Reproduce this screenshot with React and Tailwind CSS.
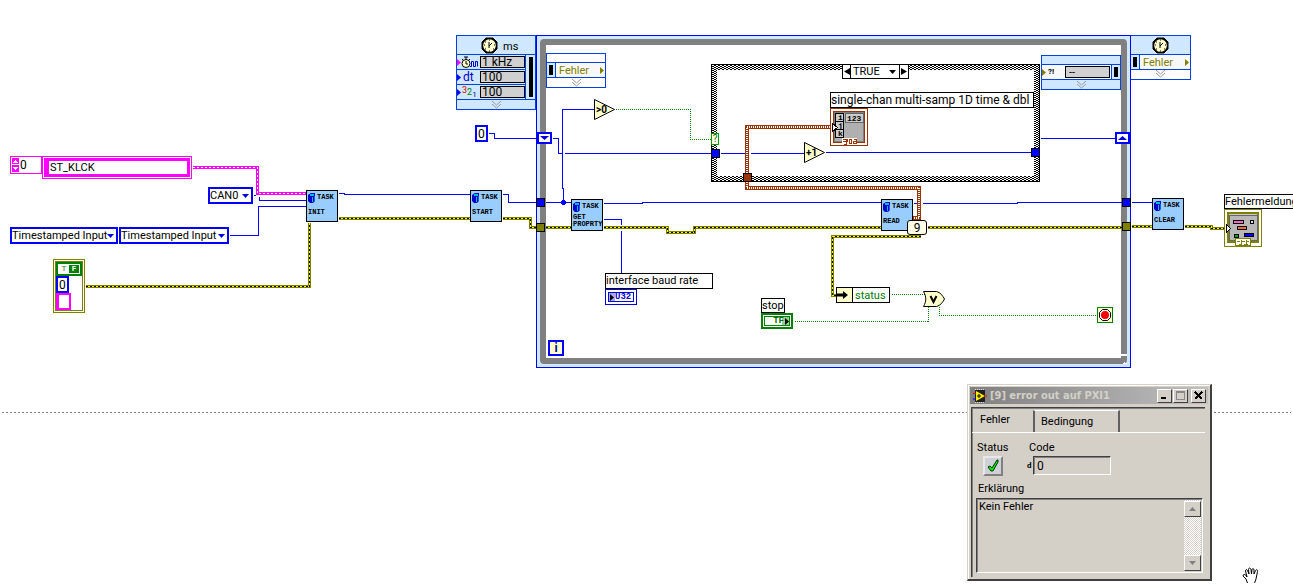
import { useState } from "react";

// wires are given as pixel coordinates on the diagram canvas
const blueWires = [
  "M253 195h2",
  "M259 196v4h47",
  "M229 235h29v-29h48",
  "M338 193h6v1h126",
  "M502 194h6v8h28",
  "M545 202h26",
  "M594 109h-32v79h1v14",
  "M488 133h6v5h43",
  "M552 138h6v15h3",
  "M564 153h147",
  "M720 153h24",
  "M750 153h54",
  "M825 152h206",
  "M1040 138h75",
  "M603 203h39v-1h239",
  "M922 203h95v-1h105",
  "M913 203h3",
  "M1131 202h21",
  "M603 219h18v5",
  "M621 230v43",
];

const errorWires = [
  "M85 286h224v-64",
  "M338 218h132",
  "M502 218h28v9h6",
  "M545 227h26",
  "M603 227h64v5h27v-5h187",
  "M927 227h195",
  "M920 236h-88v59h4",
  "M1131 226h21",
  "M1184 226h27v2h13",
];

const boolWires = [
  "M615 109h75v30h21",
  "M891 294h33",
  "M794 321h134v-15",
  "M939 306v9h158",
];

const clusterWires = ["M830 127h-83v61h172v30h-6"];

const pinkWires = ["M192 167h65v26h49"];

function Wires() {
  return (
    <svg
      className="pointer-events-none absolute inset-0 h-full w-full"
      shapeRendering="crispEdges"
      fill="none"
      aria-hidden="true"
    >
      <g transform="translate(.5 .5)">
        {blueWires.map((d) => (
          <path key={d} d={d} stroke="#0000ff" />
        ))}
        {boolWires.map((d) => (
          <path key={d} d={d} stroke="#008000" strokeDasharray="1 1" />
        ))}
        {pinkWires.map((d) => (
          <g key={d}>
            <path d={d} stroke="#ff00ff" strokeWidth="3" />
            <path d={d} stroke="#fff" strokeDasharray="2 2" />
          </g>
        ))}
        {errorWires.map((d) => (
          <g key={d}>
            <path d={d} stroke="#808000" strokeWidth="3" />
            <path d={d} stroke="#ffff00" />
            <path d={d} stroke="#000" strokeDasharray="2 2" />
          </g>
        ))}
        <circle cx="563" cy="202" r="2.5" fill="#0000ff" />
      </g>
      {clusterWires.map((d) => (
        <g key={d}>
          <path d={d} stroke="#993300" strokeWidth="4" />
          <path d={d} stroke="#fff" strokeWidth="2" strokeDasharray="1 1" />
        </g>
      ))}
    </svg>
  );
}

function Clock() {
  return (
    <svg className="h-[17px] w-[17px] shrink-0" viewBox="0 0 17 17" aria-hidden="true">
      <path d="M5 1h7l4 4v7l-4 4H5l-4-4V5z" fill="#000" stroke="#000" />
      <circle cx="8.5" cy="8.5" r="6.3" fill="#ffffcc" />
      <path d="M8 9V5M8 9l3-3M8 9v2" stroke="#000" fill="none" />
      <path d="M8 3h1M13 8h1M3 8h1M8 14h1M4 5h1M12 12h1M4 12h1" stroke="#000" />
    </svg>
  );
}

function Chevrons() {
  return (
    <svg className="mx-auto h-[8px] w-[11px]" viewBox="0 0 11 8" fill="none" stroke="#999" aria-hidden="true">
      <path d="M1 0l4.500 4 4.500-4M1 3l4.500 4 4.500-4" />
    </svg>
  );
}

function Port({ className = "" }) {
  return (
    <svg className={`h-[7px] w-[4px] shrink-0 ${className}`} viewBox="0 0 4 7" fill="currentColor" aria-hidden="true">
      <path d="M0 0l4 3.500-4 3.500z" />
    </svg>
  );
}

function Down({ className = "w-[7px]" }) {
  return (
    <svg className={`pointer-events-none h-[4px] ${className}`} viewBox="0 0 7 4" preserveAspectRatio="none" fill="currentColor" aria-hidden="true">
      <path d="M0 0h7l-3.500 4z" />
    </svg>
  );
}

function TimingInput() {
  const rows = [
    {
      label: "Source",
      value: "1 kHz",
      port: "text-[#ff00ff]",
      icon: (
        <svg className="h-[13px] w-[17px]" viewBox="0 0 17 13" fill="none" aria-hidden="true">
          <circle cx="5" cy="7.500" r="4" fill="#ffffcc" stroke="#000" />
          <path d="M5 8V5M5 8h2M3 1h4M5 1v3M1 3l1 1M9 3L8 4" stroke="#000" />
          <path d="M9 10.500h1.500v-5h2v5h2v-5h2v5" stroke="#0000cc" />
        </svg>
      ),
    },
    { label: "Period", value: "100", port: "text-[#0000ff]", icon: <span className="pl-[2px] text-[12px] text-[#0000cc]">dt</span> },
    {
      label: "Priority",
      value: "100",
      port: "text-[#0000ff]",
      icon: (
        <span className="flex h-[13px] pl-px text-[9px] leading-[9px]">
          <span className="text-[#dd0000]">3</span>
          <span className="pt-[2px] text-[#008000]">2</span>
          <span className="pt-[4px] text-[8px] text-[#0000cc]">1</span>
        </span>
      ),
    },
  ];

  return (
    <section className="absolute left-[456px] top-[35px] w-[80px] border border-[#0040dd] bg-[#d0e8ff]">
      <div className="flex h-[18px] items-center gap-[5px] pl-[24px]">
        <Clock />
        <span className="pt-1">ms</span>
      </div>
      <div className="flex border-y border-[#0040dd]">
        <div className="flex-1 divide-y divide-[#0040dd] border-r border-[#0040dd]">
          {rows.map((row, i) => (
            <div key={row.label} className={i === 2 ? "flex h-[14px] items-center" : "flex h-[15px] items-center"}>
              <Port className={row.port} />
              <span className="flex w-[19px] items-center">{row.icon}</span>
              <input
                aria-label={row.label}
                defaultValue={row.value}
                className="h-[12px] w-[45px] border border-black bg-[#d0d0d0] px-px text-[12px] leading-none"
              />
            </div>
          ))}
        </div>
        <div className="flex w-[9px] justify-center py-[2px]">
          <div className="w-[4px] bg-black" />
        </div>
      </div>
      <div className="pt-px">
        <Chevrons />
      </div>
    </section>
  );
}

function FehlerRow() {
  return (
    <div className="flex h-[15px] items-center border-b border-[#0040dd] bg-[#f8f8f8] text-[#808000]">
      <div className="flex h-full w-[9px] items-center justify-center border-r border-[#0040dd] bg-[#d0e8ff]">
        <div className="h-[10px] w-[4px] bg-black" />
      </div>
      <span className="flex-1 pl-[3px] leading-none">Fehler</span>
      <Port className="mr-px" />
    </div>
  );
}

function DataNodes() {
  return (
    <>
      <section className="absolute left-[546px] top-[53px] w-[60px] border border-[#0040dd] bg-white">
        <div className="h-[9px] border-b border-[#0040dd]" />
        <FehlerRow />
        <div className="pt-px">
          <Chevrons />
        </div>
      </section>
      <section className="absolute left-[1041px] top-[55px] w-[80px] border border-[#0040dd] bg-[#d0e8ff]">
        <div className="h-[9px] border-b border-[#0040dd]" />
        <div className="flex h-[15px] items-center border-b border-[#0040dd] bg-[#f8f8f8]">
          <Port className="text-[#808000]" />
          <span className="w-[19px] pl-[2px] text-[8px] font-bold leading-none">?!</span>
          <input
            aria-label="Error"
            defaultValue="--"
            className="h-[12px] w-[45px] border border-black bg-[#d0d0d0] pl-[3px] leading-none"
          />
          <div className="ml-px flex h-full flex-1 items-center justify-center border-l border-[#0040dd] bg-[#d0e8ff]">
            <div className="h-[10px] w-[4px] bg-black" />
          </div>
        </div>
        <div className="pt-px">
          <Chevrons />
        </div>
      </section>
      <section className="absolute left-[1131px] top-[35px] w-[60px] border border-l-0 border-[#0040dd] bg-white">
        <div className="flex h-[19px] items-center justify-center border-b border-[#0040dd] bg-[#d0e8ff]">
          <Clock />
        </div>
        <FehlerRow />
        <div className="pb-px">
          <Chevrons />
        </div>
      </section>
    </>
  );
}

function TimedLoop() {
  return (
    <div className="absolute left-[536px] top-[35px] h-[333px] w-[595px] border border-[#0000ff] bg-[#d0e8ff] p-[3px]">
      <div className="relative h-full w-full rounded-[4px] border-[6px] border-[#808080] bg-white">
        <svg className="absolute -bottom-[6px] -right-[6px] h-[10px] w-[8px]" viewBox="0 0 8 10" aria-hidden="true">
          <path d="M1 0h7v2H1zM0 3h2v1H0zM4 9h1V8h1v1h2v1H4z" fill="#fff" />
        </svg>
      </div>
    </div>
  );
}

function CaseStructure() {
  const [value, setValue] = useState("TRUE");
  const flip = () => setValue(value === "TRUE" ? "FALSE" : "TRUE");

  return (
    <>
      <div className="absolute left-[711px] top-[64px] h-[118px] w-[329px] border border-black bg-[repeating-conic-gradient(#000_0_25%,#fff_0_50%)] bg-[length:4px_2px] p-[5px]">
        <div className="h-full w-full bg-white" />
      </div>
      <div className="absolute left-[842px] top-[64px] flex h-[15px] w-[67px] border border-black bg-white">
        <button aria-label="Previous case" onClick={flip} className="flex w-[8px] items-center justify-center border-r border-black">
          <svg className="h-[7px] w-[6px]" viewBox="0 0 6 7"><path d="M6 0v7L0 3.500z" /></svg>
        </button>
        <div className="relative flex flex-1 items-center">
          <select
            aria-label="Case"
            value={value}
            onChange={(e) => setValue(e.target.value)}
            className="h-full w-full appearance-none pl-[2px] leading-none"
          >
            <option>TRUE</option>
            <option>FALSE</option>
          </select>
          <Down className="absolute right-[3px] w-[7px]" />
        </div>
        <button aria-label="Next case" onClick={flip} className="flex w-[9px] items-center justify-center border-l border-black">
          <svg className="h-[7px] w-[6px]" viewBox="0 0 6 7"><path d="M0 0v7l6-3.500z" /></svg>
        </button>
      </div>
    </>
  );
}

function Task({ name, className }) {
  return (
    <div className={`absolute h-[32px] w-[32px] border border-black bg-[#99ccff] p-px font-['Liberation_Mono',monospace] text-[7px] font-bold leading-[7px] ${className}`}>
      <div className="flex h-[11px] items-center gap-px">
        <svg className="h-[10px] w-[8px] shrink-0" viewBox="0 0 8 10" aria-hidden="true">
          <path d="M0 2l3-2h4v8l-2 2H2L0 8z" fill="#0000cc" />
          <path d="M2 1h4v2H2zM4 4h1v5H4z" fill="#00b8d8" />
          <path d="M6 3h1v5H6z" fill="#0060ff" />
        </svg>
        <span>TASK</span>
      </div>
      <div className="flex h-[18px] flex-col justify-center">{name}</div>
    </div>
  );
}

function Ring({ label, value, className }) {
  return (
    <div className={`absolute flex h-[17px] items-center border-2 border-[#0000ff] bg-white ${className}`}>
      <select aria-label={label} defaultValue={value} className="h-full w-full appearance-none leading-none">
        <option>{value}</option>
      </select>
      <Down className="absolute right-[2px] w-[7px] text-[#0000dd]" />
    </div>
  );
}

function Constants() {
  return (
    <>
      <div className="absolute left-[10px] top-[156px] flex h-[18px] w-[32px] border border-[#ff00ff] bg-white p-px">
        <svg className="h-full w-[7px] shrink-0 bg-[#ff00ff]" viewBox="0 0 7 14" fill="#fff" shapeRendering="crispEdges" aria-hidden="true">
          <path d="M3 2h1v1h1v1h1v1H1V4h1V3h1zM0 6h7v1H0zM1 9h5v1H5v1H4v1H3v-1H2v-1H1z" />
        </svg>
        <input aria-label="Index" defaultValue="0" className="w-full min-w-0 pl-px text-[12px] leading-none" />
      </div>
      <div className="absolute left-[42px] top-[156px] h-[23px] w-[150px] border border-[#ff00ff] bg-white p-px">
        <input
          aria-label="Channel"
          defaultValue="ST_KLCK"
          className="block h-full w-full border-[3px] border-l-[5px] border-[#ff00ff] bg-white px-px leading-none"
        />
      </div>

      <Ring label="Interface" value="CAN0" className="left-[208px] top-[187px] w-[45px]" />
      <Ring label="Direction" value="Timestamped Input" className="left-[10px] top-[227px] w-[108px]" />
      <Ring label="Mode" value="Timestamped Input" className="left-[119px] top-[227px] w-[110px]" />

      <div className="absolute left-[53px] top-[259px] h-[54px] w-[32px] border border-[#808000] bg-white p-px">
        <div className="h-full border border-[#808000]">
          <button className="flex h-[14px] w-full border-2 border-[#008000] bg-white p-px text-[8px] font-bold leading-[8px]">
            <span className="flex-1 text-[#66aa66]">T</span>
            <span className="w-[10px] bg-[#008000] text-white">F</span>
          </button>
          <input
            aria-label="Error code"
            defaultValue="0"
            className="block h-[17px] w-[13px] border-2 border-[#0000ff] pl-px text-[12px] leading-none"
          />
          <input
            aria-label="Error source"
            defaultValue=""
            className="block h-[17px] w-[15px] border-2 border-l-[3px] border-[#ff00ff] bg-white"
          />
        </div>
      </div>

      <input
        aria-label="Initial count"
        defaultValue="0"
        className="absolute left-[475px] top-[125px] h-[17px] w-[13px] border-2 border-[#0000ff] bg-white pl-px text-[12px] leading-none"
      />
    </>
  );
}

function Tunnels() {
  return (
    <>
      <div className="absolute left-[536px] top-[198px] h-[9px] w-[9px] border border-black bg-[#0000ff]" />
      <div className="absolute left-[536px] top-[223px] h-[9px] w-[9px] border border-black bg-[#808000]" />
      <div className="absolute left-[711px] top-[149px] h-[9px] w-[9px] border border-black bg-[#0000ff]" />
      <div className="absolute left-[743px] top-[173px] h-[9px] w-[9px] border border-black bg-[#993300]" />
      <div className="absolute left-[1031px] top-[148px] h-[9px] w-[9px] border border-black bg-[#0000ff]" />
      <div className="absolute left-[1122px] top-[198px] h-[9px] w-[9px] border border-black bg-[#0000ff]" />
      <div className="absolute left-[1122px] top-[222px] h-[9px] w-[9px] border border-black bg-[#808000]" />
      <div className="absolute left-[711px] top-[133px] flex h-[12px] w-[8px] items-center justify-center border border-[#009900] bg-[#ffffe8] text-[10px] leading-none text-[#007000]">
        ?
      </div>
      <div className="absolute left-[537px] top-[132px] flex h-[12px] w-[15px] items-center justify-center border-2 border-[#0000ff] bg-white text-[#0000dd]">
        <Down className="w-[9px]" />
      </div>
      <div className="absolute left-[1115px] top-[132px] flex h-[12px] w-[15px] items-center justify-center border-2 border-[#0000ff] bg-white text-[#0000dd]">
        <Down className="w-[9px] rotate-180" />
      </div>
    </>
  );
}

function Triangle({ text, className }) {
  return (
    <div className={`absolute flex h-[21px] w-[21px] items-center ${className}`}>
      <svg className="absolute inset-0 h-full w-full" viewBox="0 0 21 21" aria-hidden="true">
        <path d="M.5 .5v20l20-10z" fill="#ffffcc" stroke="#000" />
      </svg>
      <span className="relative pl-[2px] text-[10px] font-bold leading-none">{text}</span>
    </div>
  );
}

function Terminals() {
  return (
    <>
      <Triangle text=">0" className="left-[594px] top-[99px]" />
      <Triangle text="+1" className="left-[804px] top-[142px]" />

      <div className="absolute left-[830px] top-[92px] h-[16px] w-[204px] whitespace-nowrap border border-black bg-white text-[12px] leading-[15px]">
        single-chan multi-samp 1D time &amp; dbl
      </div>
      <svg className="absolute left-[830px] top-[108px] h-[38px] w-[38px]" viewBox="0 0 38 38" shapeRendering="crispEdges" aria-hidden="true">
        <path d="M.5 .5h37v37H.5z" fill="#fff" stroke="#993300" />
        <path d="M3.500 3.500h31v31h-31z" fill="#b0b0b0" stroke="#993300" strokeWidth="1" />
        <path d="M4.500 4.500h29v29h-29z" fill="none" stroke="#808080" />
        <path d="M5.500 5.500h8v8h-8zM5.500 13.500h8v8h-8zM5.500 21.500h8v8h-8z" fill="#ccc" stroke="#000" />
        <path d="M15.500 5.500h18v9h-18z" fill="#ccc" stroke="#666" />
        <path d="M2.500 15.500l5 4-5 4z" fill="#fff" stroke="#000" />
        <path d="M12 30h15v6H12z" fill="#fff" />
        <path d="M13 31.500h4v2h-4M16.500 31v5h-3M19.500 31.500h2v4h-2zM24 31.500h2.500v4H23.500v-2h3" fill="none" stroke="#993300" />
        <g className="font-['Liberation_Mono',monospace] text-[8px] font-bold">
          <text x="8" y="12">i</text>
          <text x="8" y="20">j</text>
          <text x="8" y="28">k</text>
          <text x="17" y="13">123</text>
        </g>
      </svg>

      <label htmlFor="baud" className="absolute left-[605px] top-[273px] h-[16px] w-[108px] border border-black bg-white leading-[14px]">
        interface baud rate
      </label>
      <button id="baud" className="absolute left-[605px] top-[289px] flex h-[16px] w-[32px] border border-[#0000dd] bg-white p-[2px]">
        <span className="flex h-full w-full items-center gap-px border border-[#0000dd] bg-[linear-gradient(90deg,#aaaaee_6px,#fff_6px)] pl-px font-['Liberation_Mono',monospace] text-[9px] font-bold leading-none text-[#0000cc]">
          <Port className="text-black" />
          U32
        </span>
      </button>

      <label htmlFor="stop" className="absolute left-[761px] top-[298px] h-[15px] w-[24px] border border-black bg-white leading-[14px]">
        stop
      </label>
      <button id="stop" className="absolute left-[761px] top-[313px] flex h-[16px] w-[32px] border-2 border-[#008000] bg-white p-px">
        <span className="flex h-full w-full items-center justify-end gap-px border border-[#008000] bg-[linear-gradient(270deg,#99cc99_7px,#fff_7px)] font-['Liberation_Mono',monospace] text-[9px] font-bold leading-none text-[#007000]">
          TF
          <Port className="text-black" />
        </span>
      </button>

      <div className="absolute left-[836px] top-[287px] flex h-[16px] w-[54px] items-center border border-black bg-white text-[#008000]">
        <svg className="h-full w-[16px] border-r border-black bg-[#ffffcc]" viewBox="0 0 15 14" aria-hidden="true">
          <path d="M0 7h9" stroke="#000" strokeWidth="3" />
          <path d="M6 3l5 4-5 4z" />
        </svg>
        <span className="pl-[2px] leading-none">status</span>
      </div>

      <svg className="absolute left-[923px] top-[291px] h-[16px] w-[22px]" viewBox="0 0 22 16" aria-hidden="true">
        <path d="M.5 .5h13c4 1 6 4 8 7.500-2 3.500-4 6.500-8 7.500H.5c3-5 3-10 0-15z" fill="#ffffcc" stroke="#000" />
        <path d="M7.500 5l3 6 3-6" fill="none" stroke="#000" strokeWidth="2" />
      </svg>

      <button aria-label="Stop condition" className="absolute left-[1097px] top-[307px] h-[16px] w-[16px] border border-[#008000] bg-[#ffffcc]">
        <svg viewBox="0 0 14 14" className="h-full w-full">
          <path d="M4.500 1.500h5l3 3v5l-3 3h-5l-3-3v-5z" fill="#fff" stroke="#000" />
          <circle cx="7" cy="7" r="4" fill="#ff0000" />
        </svg>
      </button>

      <div className="absolute left-[548px] top-[340px] flex h-[16px] w-[16px] items-center justify-center border-2 border-[#0000ff] bg-[#ffffcc] text-[12px] font-bold leading-none text-[#0000aa]">
        i
      </div>

      <div className="absolute left-[907px] top-[220px] flex h-[15px] w-[20px] items-center justify-center rounded-[3px] border border-black bg-[#ffffe8] text-[12px] leading-none">
        9
      </div>

      <div className="absolute left-[1224px] top-[194px] h-[15px] w-[76px] border border-black bg-white leading-[14px]">
        Fehlermeldung
      </div>
      <svg className="absolute left-[1224px] top-[209px] h-[38px] w-[38px]" viewBox="0 0 38 38" shapeRendering="crispEdges" aria-hidden="true">
        <path d="M.5 .5h37v37H.5z" fill="#fff" stroke="#808000" />
        <path d="M4 4h30v29H4z" fill="#ccc" stroke="#808000" strokeWidth="2" />
        <path d="M5.500 6.500h28v25h-28z" fill="#b8b8b8" stroke="#666" />
        <path d="M9.500 11.500h10v3h-10z" fill="#ff66cc" stroke="#000" />
        <path d="M26.500 11.500h3v3h-3z" fill="#ddd" stroke="#000" />
        <path d="M13.500 17.500h9v3h-9z" fill="#ff6633" stroke="#000" />
        <path d="M20.500 24.500h9v3h-9z" fill="#0000ff" stroke="#000" />
        <path d="M10.500 25.500h4v3h-4z" fill="#00aa00" stroke="#000" />
        <path d="M2.500 15.500l4 4-4 4z" fill="#fff" stroke="#000" />
        <path d="M11.500 29.500h15v7h-15z" fill="#fff" stroke="#808000" />
        <path d="M13 32h3M18 32h3M23 32h2M15 35h3M20 35h4M17 31v4M22 31v4" stroke="#808000" />
      </svg>
    </>
  );
}

function TitleButton({ label, className = "", children }) {
  return (
    <button
      aria-label={label}
      className={`flex h-[14px] w-[15px] items-center justify-center border border-b-[#404040] border-l-white border-r-[#404040] border-t-white bg-[#d4d0c8] ${className}`}
    >
      <svg viewBox="0 0 9 9" className="h-[9px] w-[9px]" fill="none" stroke="#000" shapeRendering="crispEdges">
        {children}
      </svg>
    </button>
  );
}

function ProbeWindow() {
  const [tab, setTab] = useState("Fehler");

  return (
    <section className="absolute left-[967px] top-[384px] w-[245px] border border-b-2 border-r-2 border-b-[#404040] border-l-[#d4d0c8] border-r-[#404040] border-t-[#d4d0c8] bg-[#d4d0c8] p-[2px] shadow-[inset_1px_1px_#fff]">
      <header className="flex h-[17px] items-center bg-linear-to-r from-[#808080] to-[#c0c0c0] pl-[3px] pr-[2px]">
        <svg viewBox="0 0 14 14" className="h-[14px] w-[14px] shrink-0" aria-hidden="true">
          <path d="M2 1h10v12H2z" fill="#202020" />
          <path d="M2 .5h10M2 13.500h10" stroke="#ddd" strokeDasharray="1 1" />
          <path d="M3 2v10l9-5z" fill="#ffee00" />
          <path d="M0 4.500h3M11 7h3" stroke="#ff0000" />
          <path d="M0 10h3" stroke="#0000ff" />
          <path d="M4 7h4M6 5v4" stroke="#000" />
        </svg>
        <h2 className="flex-1 whitespace-nowrap pl-[3px] font-['DejaVu_Sans_Condensed','DejaVu_Sans',sans-serif] font-bold leading-none text-[#d4d0c8]">
          [9] error out auf PXI1
        </h2>
        <TitleButton label="Minimize"><path d="M1 7h5" strokeWidth="2" /></TitleButton>
        <TitleButton label="Maximize" className="ml-px">
          <path d="M.5 1h8M.5 .5h8v8h-8z" stroke="#888" />
        </TitleButton>
        <TitleButton label="Close" className="ml-[3px]">
          <path d="M1 1l7 7M8 1L1 8" strokeWidth="2" />
        </TitleButton>
      </header>

      <div className="ml-px mr-[3px] mt-[3px] border-l border-t border-[#404040] pb-[4px] shadow-[inset_1px_1px_#808080]">
        <div role="tablist" className="flex h-[25px] border-b border-white pt-[2px]">
          <button role="tab" aria-selected={tab === "Fehler"} onClick={() => setTab("Fehler")} className="w-[61px] pb-[3px] pl-[8px] text-left">
            Fehler
          </button>
          <button
            role="tab"
            aria-selected={tab === "Bedingung"}
            onClick={() => setTab("Bedingung")}
            className="w-[87px] border-l-2 border-r-2 border-t border-l-[#606060] border-r-[#606060] border-t-white pl-[6px] text-left"
          >
            Bedingung
          </button>
        </div>

        <div className="flex pt-[8px]">
          <div className="w-[52px] pl-[5px]">
            <label htmlFor="status" className="block leading-[14px]">Status</label>
            <button id="status" className="ml-[6px] mt-px flex h-[20px] w-[20px] items-center justify-center border-2 border-b-[#808080] border-l-[#e8e8e8] border-r-[#808080] border-t-[#e8e8e8] bg-[#d0d0d8]">
              <svg viewBox="0 0 12 14" className="h-[14px] w-[12px]" aria-hidden="true">
                <path d="M1 8l2-1 2 2 5-8h1v2L6 12H4z" fill="#00ee00" stroke="#003300" />
              </svg>
            </button>
          </div>
          <div>
            <label htmlFor="code" className="block pl-[5px] leading-[14px]">Code</label>
            <div className="mt-px flex items-center">
              <span className="w-[9px] pl-[3px] text-[8px] font-bold leading-none">d</span>
              <input
                id="code"
                defaultValue="0"
                className="h-[19px] w-[78px] border border-b-white border-l-[#404040] border-r-white border-t-[#404040] px-[3px] text-[12px] shadow-[inset_1px_1px_#808080]"
              />
            </div>
          </div>
        </div>

        <label htmlFor="text" className="mt-[6px] block pl-[6px] leading-[14px]">Erklärung</label>
        <div className="ml-[4px] mr-[2px] mt-[2px] flex h-[75px] border border-b-white border-l-[#404040] border-r-white border-t-[#404040] p-px shadow-[inset_1px_1px_#808080]">
          <textarea
            id="text"
            defaultValue="Kein Fehler"
            className="min-w-0 flex-1 resize-none overflow-hidden pl-px leading-[14px]"
          />
          <div className="flex w-[17px] flex-col justify-between bg-[repeating-conic-gradient(#fff_0_25%,#d4d0c8_0_50%)] bg-[length:2px_2px] pt-px">
            <button aria-label="Scroll up" className="flex h-[16px] items-center justify-center border border-b-[#404040] border-l-white border-r-[#404040] border-t-white bg-[#d4d0c8] text-[#808080]">
              <Down className="w-[7px] rotate-180" />
            </button>
            <button aria-label="Scroll down" className="flex h-[16px] items-center justify-center border border-b-[#404040] border-l-white border-r-[#404040] border-t-white bg-[#d4d0c8] text-[#808080]">
              <Down />
            </button>
          </div>
        </div>
      </div>
    </section>
  );
}

function HandCursor() {
  return (
    <svg className="absolute left-[1242px] top-[567px] h-[17px] w-[17px]" viewBox="0 0 17 17" fill="#fff" stroke="#000" aria-hidden="true">
      <path d="M5.500 16L4 12 1 9c0-2 2-2 3-.5L5 10 3.500 4c0-1.500 1.500-2 2-.5L7 7 6.500 2.500c0-2 2-2 2.500 0L9.500 7l.5-4.500c.5-1.500 2-1 2 .5V7l1.500-3.500c1-1.500 2.500-.5 2 1L14 12l-1.500 4" />
    </svg>
  );
}

export default function App() {
  return (
    <main className="relative min-h-screen w-full overflow-hidden bg-white font-['Roboto','DejaVu_Sans',sans-serif] text-[11px] leading-[14px] text-black">
      <div className="absolute inset-x-[2px] top-[412px] h-px bg-[repeating-linear-gradient(90deg,#808080_0_2px,#fff_2px_4px)]" />
      <TimedLoop />
      <CaseStructure />
      <Wires />
      <TimingInput />
      <DataNodes />
      <Constants />
      <Tunnels />
      <Task name="INIT" className="left-[306px] top-[190px]" />
      <Task name="START" className="left-[470px] top-[190px]" />
      <Task name={<><span>GET</span><span>PROPRTY</span></>} className="left-[571px] top-[199px]" />
      <Task name="READ" className="left-[881px] top-[199px]" />
      <Task name="CLEAR" className="left-[1152px] top-[198px]" />
      <Terminals />
      <ProbeWindow />
      <HandCursor />
    </main>
  );
}
